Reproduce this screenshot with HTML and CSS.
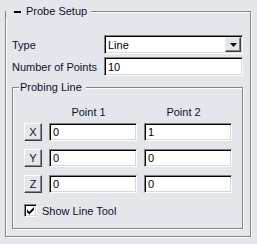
FILE: index.html
```html
<!DOCTYPE html>
<html lang="en">
<head>
    <meta charset="UTF-8">
    <meta name="viewport" content="width=device-width, initial-scale=1.0">
    <title>Probe Setup</title>
    <link rel="stylesheet" href="styles.css">
</head>
<body>
    <fieldset class="panel">
        <legend class="panel-title"><span class="collapse-mark"></span>Probe Setup</legend>

        <div class="field-row">
            <label class="field-label">Type</label>
            <div class="combo">
                <span class="combo-value">Line</span>
                <span class="combo-button">
                    <svg width="7" height="4" viewBox="0 0 7 4"><path d="M0 0H7L3.5 4Z" fill="#000"/></svg>
                </span>
            </div>
        </div>
        <div class="field-row">
            <label class="field-label" for="num-points">Number of Points</label>
            <input class="text-input" id="num-points" type="text" value="10">
        </div>

        <fieldset class="group">
            <legend class="group-title">Probing Line</legend>
            <div class="point-head">
                <span class="col-head">Point 1</span>
                <span class="col-head">Point 2</span>
            </div>
            <div class="point-grid">
                <button class="axis-btn" type="button">X</button>
                <input class="text-input" type="text" value="0">
                <input class="text-input" type="text" value="1">

                <button class="axis-btn" type="button">Y</button>
                <input class="text-input" type="text" value="0">
                <input class="text-input" type="text" value="0">

                <button class="axis-btn" type="button">Z</button>
                <input class="text-input" type="text" value="0">
                <input class="text-input" type="text" value="0">
            </div>
            <label class="check-row">
                <span class="check-box">
                    <svg width="9" height="9" viewBox="0 0 9 9"><path d="M1 3.5L3.3 5.8L8 1.1V3.8L3.3 8.5L1 6.2Z" fill="#000"/></svg>
                </span>
                Show Line Tool
            </label>
        </fieldset>
    </fieldset>
</body>
</html>
```

FILE: styles.css
```css
body {
    margin: 0;
    padding: 0;
    background-color: #e3e6ea;
    font-family: 'Liberation Sans', Arial, sans-serif;
    font-size: 11px;
    color: #10102e;
    width: 257px;
    height: 244px;
    overflow: hidden;
}
/* outer frame */
.panel {
    box-sizing: border-box;
    width: 246px;
    margin: 5px 0 0 5px;
    padding: 17px 7px 7px 6px;
    border: 1px solid #858585;
    box-shadow: inset 1px 1px 0 #fff, 1px 1px 0 #fff;
    min-inline-size: 0;
}
.panel-title {
    height: 13px;
    line-height: 13px;
    margin-left: -6px;
    padding: 0 4px 0 8px;
    background-color: #e3e6ea;
    display: flex;
    align-items: center;
}
.collapse-mark {
    display: inline-block;
    width: 7px;
    height: 2px;
    background-color: #000;
    margin-right: 5px;
}
.field-row {
    display: flex;
    align-items: center;
    height: 19px;
    margin-bottom: 3px;
}
.field-label {
    width: 92px;
    flex: none;
}
/* sunken edit style */
.text-input,
.combo {
    box-sizing: border-box;
    height: 19px;
    border: 1px solid;
    border-color: #808080 #fff #fff #808080;
    box-shadow: inset 1px 1px 0 #000, inset -1px -1px 0 #d8d8d8;
    background-color: #fff;
    font-family: inherit;
    font-size: 11px;
    color: #000;
    padding: 0 2px 0 3px;
    margin: 0;
    outline: none;
}
.field-row .text-input,
.field-row .combo {
    flex: 1;
    min-width: 0;
}
.combo {
    display: flex;
    align-items: center;
    padding: 1px 1px 1px 3px;
}
.combo-value {
    flex: 1;
}
.combo-button {
    box-sizing: border-box;
    width: 16px;
    height: 15px;
    border: 1px solid;
    border-color: #f0f0f0 #404040 #404040 #f0f0f0;
    box-shadow: inset -1px -1px 0 #808080;
    background-color: #e3e6ea;
    display: flex;
    align-items: center;
    justify-content: center;
}
/* inner frame */
.group {
    box-sizing: border-box;
    margin: 5px 0 0 0;
    padding: 12px 10px 11px 11px;
    border: 1px solid #858585;
    box-shadow: inset 1px 1px 0 #fff, 1px 1px 0 #fff;
    min-inline-size: 0;
}
.group-title {
    height: 13px;
    line-height: 13px;
    margin-left: -5px;
    padding: 0 4px 0 1px;
    background-color: #e3e6ea;
}
.point-head {
    display: flex;
    gap: 7px;
    padding-left: 25px;
    margin-bottom: 4px;
    line-height: 13px;
}
.col-head {
    width: 88px;
    text-align: center;
    padding-right: 9px;
    box-sizing: border-box;
}
.point-grid {
    display: grid;
    grid-template-columns: 18px 88px 88px;
    grid-auto-rows: 18px;
    column-gap: 7px;
    row-gap: 8px;
}
.point-grid .text-input {
    height: 18px;
    width: 88px;
}
.axis-btn {
    box-sizing: border-box;
    width: 18px;
    height: 18px;
    padding: 0;
    margin: 0;
    border: 1px solid;
    border-color: #fff #404040 #404040 #fff;
    box-shadow: inset -1px -1px 0 #8a8a8a;
    background-color: #e3e6ea;
    font-family: inherit;
    font-size: 11px;
    color: #10102e;
}
.check-row {
    display: flex;
    align-items: center;
    height: 13px;
    margin-top: 11px;
    gap: 5px;
}
.check-box {
    box-sizing: border-box;
    width: 13px;
    height: 13px;
    border: 1px solid;
    border-color: #808080 #fff #fff #808080;
    box-shadow: inset 1px 1px 0 #000, inset -1px -1px 0 #d8d8d8;
    background-color: #fff;
    display: flex;
    align-items: center;
    justify-content: center;
}
```
